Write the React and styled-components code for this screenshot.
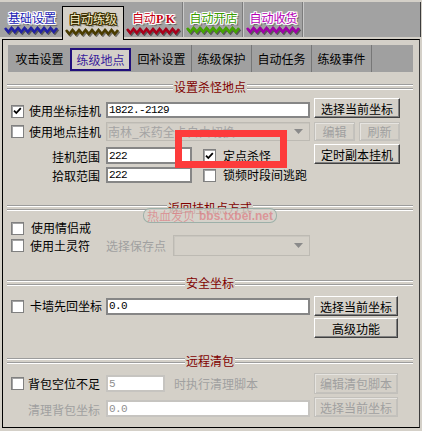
import React from 'react';
import styled, { createGlobalStyle } from 'styled-components';

const Global = createGlobalStyle`
  html, body { margin: 0; padding: 0; background: #d4d0c8; }
  body {
    font-family: "Noto Sans CJK SC", "Noto Sans", sans-serif;
    font-size: 12px;
    color: #000;
  }
`;

const Root = styled.div`
  width: 422px;
  height: 431px;
  overflow: hidden;
  background: #d4d0c8;
  display: flex;
  flex-direction: column;
`;

const TabStrip = styled.div`
  margin-top: 2px;
  height: 35px;
  width: 421px;
  box-sizing: border-box;
  background: #a2a2a2;
  border-right: 1px solid #3c3c3c;
  display: flex;
  align-items: flex-start;
  padding-left: 2px;
  flex-shrink: 0;
`;

const Tab = styled.div`
  box-sizing: border-box;
  width: ${p => (p.$active ? 62 : 60)}px;
  height: ${p => (p.$active ? 34 : 35)}px;
  margin-top: ${p => (p.$active ? 4 : 0)}px;
  padding-top: ${p => (p.$active ? 5 : 9)}px;
  display: flex;
  flex-direction: column;
  align-items: center;
  position: relative;
  z-index: ${p => (p.$active ? 2 : 0)};
  background: ${p => (p.$active ? '#d4d0c8' : 'transparent')};
  border: ${p => (p.$active ? '1px solid #000' : 'none')};
  border-bottom: none;
  border-right: ${p => (p.$active ? '1px solid #000' : p.$sep ? '1px solid #cacaca' : 'none')};
  box-shadow: ${p => (p.$sep && !p.$active ? '-1px 0 0 #7c7c7c inset' : 'none')};
`;

const outline = c =>
  `-1px -1px 0 ${c}, 1px -1px 0 ${c}, -1px 1px 0 ${c}, 1px 1px 0 ${c}, -1px 0 0 ${c}, 1px 0 0 ${c}, 0 -1px 0 ${c}, 0 1px 0 ${c}, 2px 2px 1px rgba(0,0,0,0.45)`;

const TabLabel = styled.span`
  font-size: 12px;
  line-height: 14px;
  white-space: nowrap;
  color: ${p => p.$color};
  text-shadow: ${p => outline(p.$outline)};
`;

const Latin = styled.span`
  font-family: "Liberation Serif", serif;
  font-weight: bold;
`;

const WaveSvg = styled.svg`
  display: block;
  margin-top: ${p => (p.$active ? 2 : 1)}px;
`;

const Wave = ({ color, active }) => {
  const pts = [];
  for (let i = 0; i <= 16; i++) pts.push(`${1 + i * 3.25},${i % 2 ? 6 : 2}`);
  const s = pts.join(' ');
  return (
    <WaveSvg width="56" height="9" $active={active}>
      <polyline points={s} transform="translate(1.2,1.4)" stroke="rgba(0,0,0,0.45)" strokeWidth="2.6" fill="none" />
      <polyline points={s} stroke={color} strokeWidth="2.6" fill="none" />
    </WaveSvg>
  );
};

const Panel = styled.div`
  position: relative;
  margin: 2px 0 0 2px;
  width: 418px;
  height: 389px;
  box-sizing: border-box;
  border: 1px solid #000;
  border-right-color: #3c3c3c;
  display: flex;
  flex-direction: column;
  flex-shrink: 0;
`;

const SubTabBar = styled.div`
  display: flex;
  align-items: stretch;
  box-sizing: border-box;
  width: 405px;
  height: 27px;
  margin: 5px 0 0 5px;
  background: #a0a0a0;
  flex-shrink: 0;
`;

const SubTab = styled.div`
  box-sizing: border-box;
  width: ${p => (p.$active ? 61 : p.$first ? 59 : 60)}px;
  margin: ${p => (p.$active ? '3px 1px 1px 1px' : p.$first ? '0 0 0 2px' : '0')};
  display: flex;
  align-items: center;
  justify-content: center;
  white-space: nowrap;
  border: ${p => (p.$active ? '2px solid #22107c' : 'none')};
  border-right: ${p => (p.$active ? '2px solid #22107c' : p.$sep ? '1px solid #777' : 'none')};
  background: ${p => (p.$active ? '#d4d0c8' : 'transparent')};
  color: ${p => (p.$active ? '#3a1c9c' : '#000')};
`;

const SectionHead = styled.div`
  display: flex;
  align-items: center;
  height: 14px;
  margin: ${p => p.$mt}px 6px 0 4px;
  color: #800000;
  line-height: 14px;
  flex-shrink: 0;
`;

const Rule = styled.div`
  flex: 1;
  height: 6px;
  background: linear-gradient(#9c9c9c 0 1px, #fff 1px 2px, transparent 2px 4px, #9c9c9c 4px 5px, #fff 5px 6px);
`;

const HeadText = styled.span`
  padding: 0 1px;
  white-space: nowrap;
`;

const Row = styled.div`
  display: flex;
  align-items: ${p => p.$align || 'center'};
  height: ${p => p.$h}px;
  margin-top: ${p => p.$mt}px;
  padding-left: 8px;
  flex-shrink: 0;
`;

const LabelCell = styled.div`
  width: 89px;
  margin-right: 6px;
  display: flex;
  align-items: center;
  justify-content: ${p => (p.$right ? 'flex-end' : 'flex-start')};
  white-space: nowrap;
  flex-shrink: 0;
  line-height: 14px;
  color: ${p => (p.$disabled ? '#a0a0a0' : '#000')};
`;

const Middle = styled.div`
  width: 204px;
  margin-right: 4px;
  display: flex;
  align-items: center;
  flex-shrink: 0;
`;

const Buttons = styled.div`
  display: flex;
  gap: 4px;
`;

const CheckBoxBox = styled.span`
  box-sizing: border-box;
  width: 13px;
  height: 13px;
  background: #fff;
  border: 1px solid #808080;
  box-shadow: inset 1px 1px 0 #a4a4a4;
  display: inline-flex;
  align-items: center;
  justify-content: center;
  flex-shrink: 0;
`;

const CheckText = styled.span`
  margin-left: ${p => p.$gap ?? 5}px;
  white-space: nowrap;
  line-height: 14px;
  color: ${p => (p.$disabled ? '#a0a0a0' : '#000')};
`;

const Check = ({ checked }) => (
  <CheckBoxBox>
    {checked && (
      <svg width="9" height="8" viewBox="0 0 9 8">
        <polyline points="1,3.6 3.3,6 7.8,1.2" stroke="#000" strokeWidth="1.8" fill="none" />
      </svg>
    )}
  </CheckBoxBox>
);

const Field = styled.div`
  box-sizing: border-box;
  width: ${p => p.$w}px;
  height: ${p => p.$h || 17}px;
  background: #fff;
  border: 2px solid ${p => (p.$disabled ? '#c6c4c0' : '#868686')};
  padding-left: 1px;
  display: flex;
  align-items: center;
  flex-shrink: 0;
  font-family: "Liberation Mono", monospace;
  font-size: 11px;
  letter-spacing: -0.6px;
  color: ${p => (p.$disabled ? '#909090' : '#000')};
`;

const Select = styled.div`
  box-sizing: border-box;
  width: ${p => p.$w}px;
  height: ${p => p.$h}px;
  border: 1px solid #bdbab3;
  box-shadow: inset 1px 1px 0 #c9c6bf;
  background: #d4d0c8;
  color: #a4a4a4;
  display: flex;
  align-items: center;
  justify-content: space-between;
  padding: 0 6px 0 1px;
  white-space: nowrap;
  overflow: hidden;
  flex-shrink: 0;
`;

const GrayText = styled.span`
  color: #a0a0a0;
  white-space: nowrap;
  margin-right: ${p => p.$mr || 0}px;
  margin-left: ${p => p.$ml || 0}px;
`;

const Button = styled.div`
  box-sizing: border-box;
  width: ${p => p.$w}px;
  height: ${p => p.$h || 20}px;
  background: #d4d0c8;
  display: flex;
  align-items: center;
  justify-content: center;
  white-space: nowrap;
  flex-shrink: 0;
  border: 1px solid;
  border-color: ${p => (p.$disabled ? '#c2c0bb' : '#fff #404040 #404040 #fff')};
  box-shadow: ${p => (p.$disabled ? 'inset 1px 1px 0 #e6e4e0, inset -1px -1px 0 #c4c2bd' : 'inset -1px -1px 0 #808080')};
  color: ${p => (p.$disabled ? '#a0a0a0' : '#000')};
`;

const Spacer = styled.div`
  width: ${p => p.$w}px;
  flex-shrink: 0;
`;

const RedMark = styled.div`
  position: absolute;
  left: 172px;
  top: 90px;
  width: 112px;
  height: 38px;
  box-sizing: border-box;
  border: 7px solid #fd3b3b;
  pointer-events: none;
`;

const Watermark = styled.div`
  position: absolute;
  left: 140px;
  top: 168px;
  width: 134px;
  height: 15px;
  box-sizing: border-box;
  border: 1px solid rgba(110, 150, 140, 0.55);
  border-radius: 7px;
  background: rgba(214, 210, 203, 0.82);
  display: flex;
  align-items: center;
  justify-content: center;
  gap: 4px;
  color: rgba(222, 110, 118, 0.62);
  white-space: nowrap;
  pointer-events: none;
`;

const WmCn = styled.span`
  font-size: 12px;
  line-height: 14px;
`;

const WmEn = styled.span`
  font-family: "Liberation Sans", sans-serif;
  font-weight: bold;
  font-size: 12px;
  line-height: 14px;
`;

const Arrow = () => (
  <svg width="9" height="5">
    <polygon points="0,0 9,0 4.5,5" fill="#8a8a8a" />
  </svg>
);

const tabs = [
  { label: '基础设置', color: '#1c1cb4', outline: '#fff', wave: '#2222a4' },
  { label: '自动练级', color: '#f4ecc8', outline: '#3a2e00', wave: '#4a3c00', active: true },
  { label: 'pk', color: '#c40012', outline: '#fff', wave: '#a8001a' },
  { label: '自动开店', color: '#3c9c00', outline: '#fff', wave: '#44a400' },
  { label: '自动收货', color: '#b400b4', outline: '#fff', wave: '#a000a8' },
];

const subTabs = ['攻击设置', '练级地点', '回补设置', '练级保护', '自动任务', '练级事件'];

export default function App() {
  return (
    <Root>
      <Global />
      <TabStrip>
        {tabs.map((t, i) => (
          <Tab key={i} $active={t.active} $sep={i >= 2}>
            <TabLabel $color={t.color} $outline={t.outline}>
              {t.label === 'pk' ? (
                <>
                  自动<Latin>P K</Latin>
                </>
              ) : (
                t.label
              )}
            </TabLabel>
            <Wave color={t.wave} active={t.active} />
          </Tab>
        ))}
      </TabStrip>

      <Panel>
        <SubTabBar>
          {subTabs.map((s, i) => (
            <SubTab key={s} $active={i === 1} $first={i === 0} $sep={i >= 2}>
              {s}
            </SubTab>
          ))}
        </SubTabBar>

        <SectionHead $mt={8}>
          <Rule />
          <HeadText>设置杀怪地点</HeadText>
          <Rule />
        </SectionHead>

        <Row $h={20} $mt={4} $align="flex-end">
          <LabelCell>
            <Check checked />
            <CheckText>使用坐标挂机</CheckText>
          </LabelCell>
          <Middle>
            <Field $w={204} $h={16}>1822.-2129</Field>
          </Middle>
          <Button $w={86}>选择当前坐标</Button>
        </Row>

        <Row $h={19} $mt={4}>
          <LabelCell>
            <Check />
            <CheckText>使用地点挂机</CheckText>
          </LabelCell>
          <Middle>
            <Select $w={204} $h={19}>
              <span>南林_采药全卡自由切换</span>
              <Arrow />
            </Select>
          </Middle>
          <Buttons>
            <Button $w={41} $h={19} $disabled>编辑</Button>
            <Button $w={41} $h={19} $disabled>刷新</Button>
          </Buttons>
        </Row>

        <Row $h={21} $mt={2} $align="flex-end">
          <LabelCell $right>挂机范围</LabelCell>
          <Middle>
            <Field $w={86}>222</Field>
            <Spacer $w={11} />
            <Check checked />
            <CheckText $gap={7}>定点杀怪</CheckText>
          </Middle>
          <Button $w={86}>定时副本挂机</Button>
        </Row>

        <Row $h={16} $mt={3} $align="flex-end">
          <LabelCell $right>拾取范围</LabelCell>
          <Middle>
            <Field $w={86} $h={16}>222</Field>
            <Spacer $w={11} />
            <Check />
            <CheckText $gap={7}>锁频时段间逃跑</CheckText>
          </Middle>
        </Row>

        <SectionHead $mt={18}>
          <Rule />
          <HeadText>返回挂机点方式</HeadText>
          <Rule />
        </SectionHead>

        <Row $h={14} $mt={6}>
          <LabelCell>
            <Check />
            <CheckText $gap={7}>使用情侣戒</CheckText>
          </LabelCell>
        </Row>

        <Row $h={21} $mt={0}>
          <LabelCell>
            <Check />
            <CheckText $gap={6}>使用土灵符</CheckText>
          </LabelCell>
          <Middle>
            <GrayText $mr={7}>选择保存点</GrayText>
            <Select $w={137} $h={21}>
              <span />
              <Arrow />
            </Select>
          </Middle>
        </Row>

        <SectionHead $mt={20}>
          <Rule />
          <HeadText>安全坐标</HeadText>
          <Rule />
        </SectionHead>

        <Row $h={20} $mt={6}>
          <LabelCell>
            <Check />
            <CheckText $gap={6}>卡墙先回坐标</CheckText>
          </LabelCell>
          <Middle>
            <Field $w={204}>0.0</Field>
          </Middle>
          <Button $w={84}>选择当前坐标</Button>
        </Row>

        <Row $h={20} $mt={2}>
          <Spacer $w={95} />
          <Spacer $w={208} />
          <Button $w={84}>高级功能</Button>
        </Row>

        <SectionHead $mt={16}>
          <Rule />
          <HeadText>远程清包</HeadText>
          <Rule />
        </SectionHead>

        <Row $h={21} $mt={5}>
          <LabelCell>
            <Check />
            <CheckText $gap={4}>背包空位不足</CheckText>
          </LabelCell>
          <Middle>
            <Field $w={59} $disabled>5</Field>
            <GrayText $ml={9}>时执行清理脚本</GrayText>
          </Middle>
          <Button $w={84} $h={21} $disabled>编辑清包脚本</Button>
        </Row>

        <Row $h={20} $mt={3} $align="flex-end">
          <LabelCell $right $disabled>清理背包坐标</LabelCell>
          <Middle>
            <Field $w={204} $disabled>0.0</Field>
          </Middle>
          <Button $w={84} $disabled>选择当前坐标</Button>
        </Row>

        <RedMark />
        <Watermark>
          <WmCn>热血发贝</WmCn>
          <WmEn>bbs.txbei.net</WmEn>
        </Watermark>
      </Panel>
    </Root>
  );
}
